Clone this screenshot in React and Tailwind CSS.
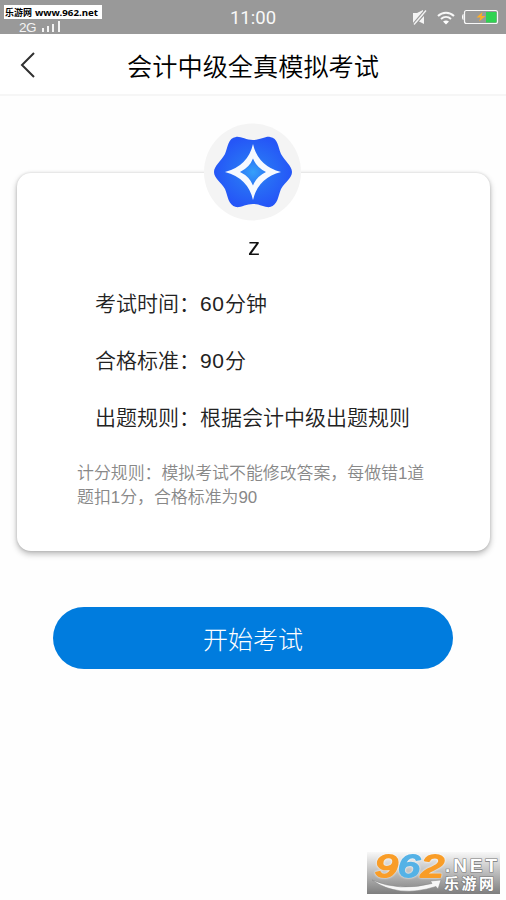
import React from "react";

function StatusBar() {
  return (
    <header className="relative flex h-[34px] items-center bg-[#999999] text-white">
      <div className="absolute left-1 top-[5px] flex h-[14px] w-[98px] items-center justify-center whitespace-nowrap bg-white text-black">
        <svg width="98" height="14" className="block">
          <text x="1" y="11" fontSize="9" fontWeight="700" fill="#000" textLength="27" lengthAdjust="spacingAndGlyphs">乐游网</text>
          <text x="31" y="11" fontSize="9.5" fontWeight="700" fill="#000" fontFamily="'Noto Sans', sans-serif" textLength="63" lengthAdjust="spacingAndGlyphs">www.962.net</text>
        </svg>
      </div>
      <div className="flex w-full items-end pl-[19px] pt-[20px]">
        <span className="h-[14px] w-[18px] font-['Liberation_Sans',sans-serif] text-[13.5px] leading-[15px] tracking-[-0.5px] text-[#f4f4f4]">2G</span>
        <svg width="20" height="13" viewBox="0 0 20 13" className="ml-1 shrink-0" fill="#f4f4f4">
          <rect x="1" y="7" width="2" height="4" />
          <rect x="6" y="5" width="2" height="6" />
          <rect x="11" y="3" width="2" height="8" />
          <rect x="17" y="0" width="2" height="11" />
        </svg>
      </div>
      <span className="absolute left-1/2 top-0 -translate-x-1/2 text-[18.5px] leading-[36px] text-[#f8f8f8]">11:00</span>
      <svg width="88" height="20" viewBox="412 7 88 20" className="absolute left-[412px] top-[7px]" fill="none">
        <path d="M413 13h4l6-3v5l-7 8h-3z M424 16v8l-5-2.500z" fill="#f4f4f4" />
        <path d="M413 24.500 425 10.500" stroke="#999999" strokeWidth="2" />
        <path d="M414 24.500 426 10.500" stroke="#f4f4f4" strokeWidth="1.300" />
        <path d="M438 16c4.500-4.500 11.500-4.500 16 0M441 19c3-2.600 7-2.600 10 0" stroke="#f8f8f8" strokeWidth="2" />
        <path d="m443 21.500c2-1.300 4-1.300 6 0l-3 3z" fill="#fff" />
        <rect x="464.500" y="10.500" width="33" height="13" rx="2" stroke="#f8f8f8" strokeWidth="1.200" />
        <path d="M463.500 14c-2 0-2 6 0 6z" fill="#fff" />
        <path d="M486 12h10.500v10.500h-10.500z" fill="#2fd351" />
        <path d="m482.500 12-6 5.500h4l-1.500 4 6.500-5.500h-4z" fill="#ffad24" />
      </svg>
    </header>
  );
}

function Emblem() {
  return (
    <svg width="98" height="98" viewBox="0 0 98 98" className="absolute left-[187px] top-[-50px]">
      <defs>
        <radialGradient id="emblemBlue">
          <stop offset="0" stopColor="#35a0fa" />
          <stop offset=".45" stopColor="#286ff5" />
          <stop offset="1" stopColor="#2556f7" />
        </radialGradient>
      </defs>
      <circle cx="48.500" cy="49" r="48.500" fill="#f4f4f4" />
      <path d="M32 14c4-1 10 3 17 3s13-4 17-3c8 1 8 10 11 17 4 7 11 12 11 18s-7 10-11 17c-3 7-3 16-11 18-4 1-10-3-17-3s-13 4-17 3c-8-2-8-11-11-18-4-7-11-11-11-17s7-11 11-18c3-7 3-16 11-17z" fill="url(#emblemBlue)" />
      <path fillRule="evenodd" d="M49 21q5 22 28 28-23 6-28 28-5-22-28-28 23-6 28-28zm0 14.500q-3.500 9-13 13.500 9.500 4.500 13 13.500 3.500-9 13-13.500-9.500-4.500-13-13.500z" fill="#f6faff" />
    </svg>
  );
}

function InfoRow({ label, number, text }) {
  return (
    <div className="flex h-[57px] items-center whitespace-nowrap text-[21px] font-[350] leading-[30px] text-[#222]">
      <span className="w-[105px]">{label}：</span>
      {number && <span className="w-[25px] font-['Liberation_Sans',sans-serif] tracking-[0.5px]">{number}</span>}
      <span>{text}</span>
    </div>
  );
}

function SiteMark() {
  return (
    <svg width="133" height="42" viewBox="0 0 133 42" className="ml-[367px] mt-[183px] block overflow-visible">
      <defs>
        <linearGradient id="markBack" x2="0" y2="1">
          <stop stopColor="#f8f8f8" />
          <stop offset="1" stopColor="#7e7e7e" />
        </linearGradient>
      </defs>
      <rect width="133" height="42" fill="url(#markBack)" />
      <g fontFamily="'Liberation Sans', sans-serif" fontStyle="italic" fontSize="32" strokeWidth="2.200" strokeLinejoin="round" className="drop-shadow-[0_0_1px_#ffffff]">
        <text x="8" y="25" fill="#f99d28" stroke="#f99d28" textLength="23" lengthAdjust="spacingAndGlyphs">9</text>
        <text x="31" y="25" fill="#55b2e6" stroke="#55b2e6" textLength="22" lengthAdjust="spacingAndGlyphs">6</text>
        <text x="54" y="25" fill="#f99d28" stroke="#f99d28" textLength="23" lengthAdjust="spacingAndGlyphs">2</text>
      </g>
      <path d="M5 28q27 12 60 3.500l-1.500-2.500 10.500-1-3 9-2-2.500q-38 12-64-6.500z" fill="#f7f7f7" stroke="#858585" strokeWidth=".5" />
      <g fill="#fff" stroke="#777" strokeWidth="1.200" paintOrder="stroke" fontWeight="700">
        <text x="78" y="20" fontSize="19" fontFamily="'Liberation Sans', sans-serif" textLength="52" lengthAdjust="spacing">.NET</text>
        <text x="77" y="37" fontSize="15" textLength="50" lengthAdjust="spacing">乐游网</text>
      </g>
    </svg>
  );
}

export default function App() {
  return (
    <div className="h-[900px] w-[506px] overflow-hidden bg-[#fefefe] font-['Roboto','Noto_Sans_CJK_SC',sans-serif]">
      <StatusBar />
      <nav className="relative flex h-[62px] items-center justify-center border-b-2 border-[#f6f6f6] bg-white">
        <svg width="16" height="28" viewBox="0 0 16 28" className="absolute left-5 top-[17px]" fill="none" stroke="#303030" strokeWidth="2">
          <path d="M14 2 2 14l12 12" />
        </svg>
        <h1 className="whitespace-nowrap pt-[8px] text-[25.2px] font-[350] leading-[36px] text-black">会计中级全真模拟考试</h1>
      </nav>
      <main>
        <section className="relative ml-[17px] mt-[77px] h-[378px] w-[473px] rounded-[14px] bg-white shadow-[0_3px_6px_rgba(0,0,0,0.28),0_0_3px_rgba(0,0,0,0.15)]">
          <Emblem />
          <div className="pt-[59px] text-center">
            <span className="mx-auto block h-[30px] w-[18px] scale-x-110 font-['Noto_Sans',sans-serif] text-[23px] leading-[28px] text-[#111]">z</span>
          </div>
          <div className="ml-[78px] mt-[13px]">
            <InfoRow label="考试时间" number="60" text="分钟" />
            <InfoRow label="合格标准" number="90" text="分" />
            <InfoRow label="出题规则" text="根据会计中级出题规则" />
          </div>
          <p className="ml-[60px] mt-[16px] whitespace-nowrap font-['Liberation_Sans','Noto_Sans_CJK_SC',sans-serif] text-[16.9px] font-[350] leading-[24px] text-[#888]">
            计分规则：模拟考试不能修改答案，每做错1道<br />题扣1分，合格标准为90
          </p>
        </section>
        <button className="ml-[53px] mt-[56px] flex h-[62px] w-[400px] items-center justify-center rounded-full bg-[#007cde] pt-[6px] text-[25px] font-light text-white">开始考试</button>
      </main>
      <SiteMark />
    </div>
  );
}
